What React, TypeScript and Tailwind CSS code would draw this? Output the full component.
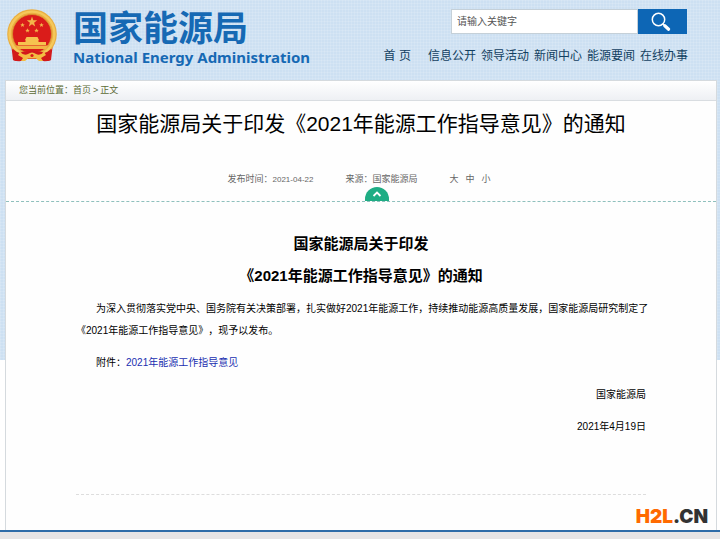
const NAV_ITEMS = ["信息公开", "领导活动", "新闻中心", "能源要闻", "在线办事"];

function Emblem() {
  return (
    <svg viewBox="0 0 50 54" className="w-[50px] h-[54px] shrink-0" aria-hidden="true">
      <path d="M4 34 L6 51 Q14 54 18 50 H32 Q36 54 44 51 L46 34 Z" fill="#d2191b" />
      <circle cx="25" cy="25" r="24.8" fill="#eaae40" />
      <circle cx="25" cy="25" r="22.4" fill="none" stroke="#f5c85a" strokeWidth="2.4" />
      <circle cx="25" cy="25" r="19.5" fill="#da1c1a" stroke="#d9932e" strokeWidth="0.8" />
      <path
        d="M25 7.5 L26.3 11.2 L30.2 11.3 L27.1 13.7 L28.2 17.5 L25 15.2 L21.8 17.5 L22.9 13.7 L19.8 11.3 L23.7 11.2 Z"
        fill="#f3b54a"
      />
      {[
        [15.5, 16],
        [34.5, 16],
        [20.5, 21.5],
        [29.5, 21.5],
      ].map(([x, y]) => (
        <path
          key={`${x}-${y}`}
          transform={`translate(${x} ${y})`}
          d="M0 -2.2 L0.6 -0.7 L2.2 -0.6 L1 0.4 L1.4 2 L0 1.1 L-1.4 2 L-1 0.4 L-2.2 -0.6 L-0.6 -0.7 Z"
          fill="#f3b54a"
        />
      ))}
      <path d="M19.5 28 H30.5 L32 31 H18 Z M18.5 31 H31.5 V34 H18.5 Z M11 33 H39 V36 H11 Z" fill="#f6c24f" />
      <path d="M9 36.5 H41 L39 40 H11 Z" fill="#f2b445" />
      <path d="M6 40 Q9 43 13 44 L9 52 L6 51 Z M44 40 Q41 43 37 44 L41 52 L44 51 Z" fill="#d2191b" />
      <path d="M13 44 Q16 41.5 20 43 Q25 40 30 43 Q34 41.5 37 44 L42 47 Q38 52 32 50 H18 Q12 52 8 47 Z" fill="#d2191b" />
      <path d="M13 43 Q17 47 21 45 Q25 42 29 45 Q33 47 37 43 L39 46 L34 49 L36 52 H32 L29 49.5 H21 L18 52 H14 L16 49 L11 46 Z" fill="#f3bd42" />
      <circle cx="25" cy="46.5" r="1.6" fill="#da1c1a" />
    </svg>
  );
}

function Header() {
  return (
    <header className="flex h-20 justify-between pl-[7px] pr-8">
      <a href="#" className="flex gap-4 pt-[9px] text-[#1669b4]">
        <Emblem />
        <span className="flex flex-col pt-[2px] font-bold">
          <span className="text-[35px] leading-9">国家能源局</span>
          <span className="font-['Noto_Sans','Open_Sans',sans-serif] text-[15px] leading-5">
            National Energy Administration
          </span>
        </span>
      </a>
      <div className="flex flex-col items-end pt-[9px]">
        <form className="mr-px flex h-[25px]" onSubmit={(e) => e.preventDefault()}>
          <input
            type="text"
            aria-label="请输入关键字"
            placeholder="请输入关键字"
            className="w-[187px] border border-[#c5d0d8] bg-white px-[5px] text-[10px] text-gray-700 outline-none placeholder:text-[#555]"
          />
          <button type="submit" aria-label="搜索" className="flex w-[49px] items-center justify-center bg-[#0d66b5] pr-1">
            <svg viewBox="0 0 20 20" className="h-5 w-5" fill="none" stroke="white">
              <circle cx="7.5" cy="7.5" r="6.2" strokeWidth="1.5" />
              <path d="M12 12 L13.5 13.5" strokeWidth="1.5" />
              <path d="M13.8 13.8 L17.6 17.2" strokeWidth="3.2" strokeLinecap="round" />
            </svg>
          </button>
        </form>
        <nav className="mt-3 flex gap-[5px] text-[12px] leading-5 text-[#123f61]">
          <a href="#" className="mr-3">
            首 页
          </a>
          {NAV_ITEMS.map((item) => (
            <a href="#" key={item}>
              {item}
            </a>
          ))}
        </nav>
      </div>
    </header>
  );
}

function ArticleHead() {
  return (
    <div className="border-b border-dashed border-[#8fc0bd] text-center">
      <h1 className="pt-[7px] text-[21px] leading-8 text-black">
        国家能源局关于印发《2021年能源工作指导意见》的通知
      </h1>
      <div className="mt-[31px] flex h-4 justify-center gap-8 pr-1 text-[9px] leading-4 text-[#666]">
        <span>
          发布时间：<span className="text-[8px]">2021-04-22</span>
        </span>
        <span>来源：国家能源局</span>
        <span className="flex gap-[7px]">
          <button type="button">大</button>
          <button type="button">中</button>
          <button type="button">小</button>
        </span>
      </div>
      <button
        type="button"
        aria-label="收起"
        className="ml-[calc(50%+4px)] flex h-[14px] w-6 items-center justify-center rounded-t-full bg-[#1fad84]"
      >
        <svg viewBox="0 0 10 6" className="h-[6px] w-[10px]" fill="none" stroke="white" strokeWidth="1.8">
          <path d="M1.5 5 L5 1.5 L8.5 5" />
        </svg>
      </button>
    </div>
  );
}

function ArticleBody() {
  return (
    <article className="mx-[70px] border-b border-dashed border-[#ddd] pb-14 pt-[26px] text-[10px] leading-[22px] text-black">
      <h2 className="text-center text-[15px] font-bold leading-8">
        国家能源局关于印发
        <br />
        《2021年能源工作指导意见》的通知
      </h2>
      <p className="-mr-2 mt-[6px] indent-5">
        为深入贯彻落实党中央、国务院有关决策部署，扎实做好2021年能源工作，持续推动能源高质量发展，国家能源局研究制定了《2021年能源工作指导意见》，现予以发布。
      </p>
      <p className="mt-[10px] indent-5">
        附件：
        <a href="#" className="text-[#1a2fb0]">
          2021年能源工作指导意见
        </a>
      </p>
      <p className="mt-[10px] text-right">国家能源局</p>
      <p className="mt-[10px] text-right">2021年4月19日</p>
    </article>
  );
}

export default function App() {
  return (
    <div className="min-h-screen flex flex-col bg-white bg-no-repeat bg-[length:100%_360px] bg-[image:repeating-linear-gradient(90deg,#ffffff20_0_1px,transparent_1px_3px),repeating-linear-gradient(#ffffff20_0_1px,transparent_1px_3px),linear-gradient(#cde0f2,#cde0f2)] font-['Liberation_Sans','Noto_Sans_CJK_SC',sans-serif] [text-spacing-trim:space-all]">
      <Header />
      <main className="ml-[5px] mr-[3px] flex flex-1 flex-col border border-b-0 border-[#d5dade] bg-[#fefefe]">
        <div className="flex h-5 items-center border-b border-[#d9dde1] bg-linear-to-b from-white to-[#eef0f4] px-[13px] text-[9px] text-[#5c6b35]">
          您当前位置：<a href="#">首页</a>
          <span className="mx-[2px]">&gt;</span>正文
        </div>
        <ArticleHead />
        <ArticleBody />
        <p className="mt-auto self-end px-2 pb-px font-['Inter',sans-serif] text-[19px] font-black leading-6 text-[#333]">
          <span className="text-[#ff6a00]">H2L</span>.CN
        </p>
      </main>
      <footer className="h-[9px] border-t-2 border-[#2f6ca8] bg-[#e6e4e5]" />
    </div>
  );
}
